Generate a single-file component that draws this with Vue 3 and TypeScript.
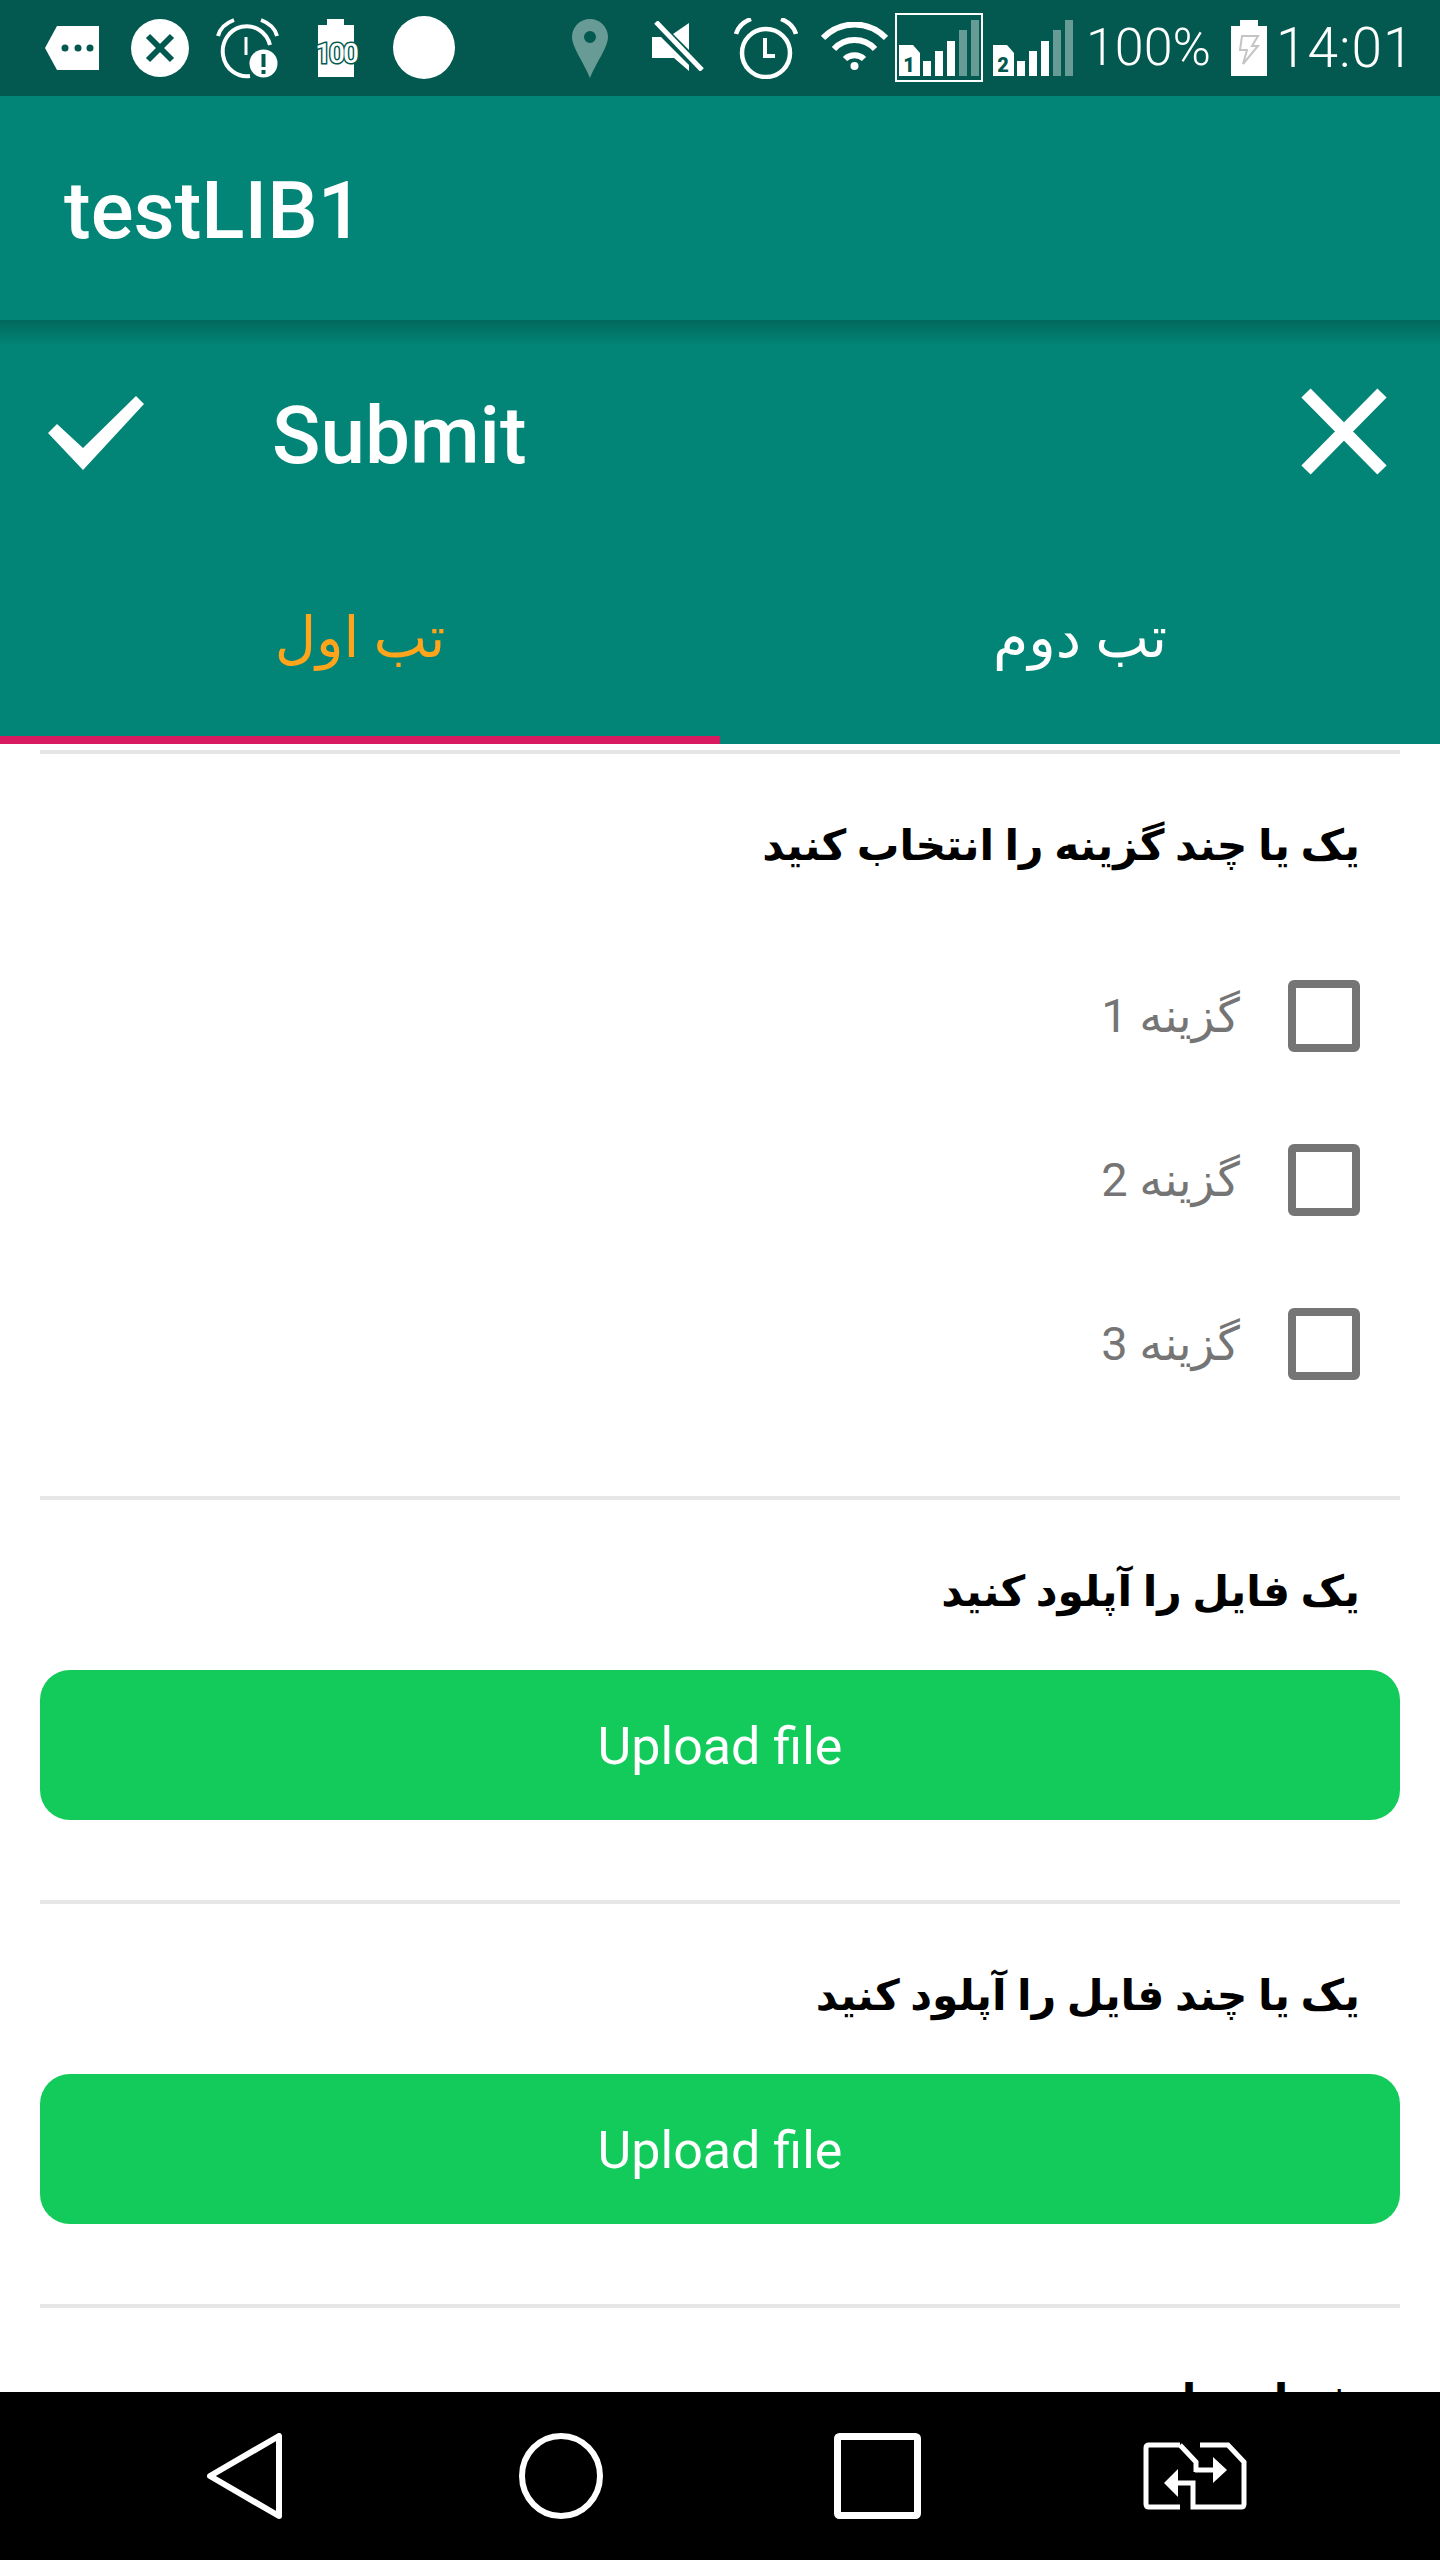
<script setup lang="ts">
interface Option {
  id: number;
  label: string;
}

const options: Option[] = [
  { id: 1, label: "گزینه 1" },
  { id: 2, label: "گزینه 2" },
  { id: 3, label: "گزینه 3" },
];
</script>

<template>
  <div class="screen">
    <div class="status-bar">
      <svg class="si si-msg" viewBox="0 0 54 44"><path d="M12 0H54V44H12L0 22Z" fill="#fff" /><circle cx="20" cy="22" r="3.5" fill="#03594f" /><circle cx="33" cy="22" r="3.5" fill="#03594f" /><circle cx="45" cy="22" r="3.5" fill="#03594f" /></svg>
      <svg class="si si-x" viewBox="0 0 58 58"><circle cx="29" cy="29" r="29" fill="#fff" /><path d="M17 17L41 41M41 17L17 41" stroke="#03594f" stroke-width="6" /></svg>
      <svg class="si si-alarmw" viewBox="0 0 63 60" fill="none" stroke="#fff"><path d="M2 18C4 10 10 5 18 2M61 18C59 10 53 5 45 2" stroke-width="4" /><path d="M54 27A24 25 0 1 0 34 58" stroke-width="4" /><path d="M30 19V37" stroke-width="3" /><circle cx="47.500" cy="45.500" r="14" fill="#fff" stroke="none" /><path d="M47.500 36V49M47.500 52V56" stroke="#03594f" stroke-width="4" /></svg>
      <svg class="si si-batt" viewBox="0 0 44 58"><path d="M13 0H30V6H40V58H4V6H13Z" fill="#fff" /><text x="22" y="44" text-anchor="middle" class="batt-num">100</text></svg>
      <span class="si si-dot"></span>
      <svg class="si si-pin" viewBox="0 0 36 59"><path fill-rule="evenodd" d="M18 0C8 0 0 8 0 18C0 28 12 44 18 59C24 44 36 28 36 18C36 8 28 0 18 0ZM18 12A6 6 0 1 1 18 24A6 6 0 1 1 18 12Z" fill="#fff" /></svg>
      <svg class="si si-mute" viewBox="0 0 53 50"><path d="M0 16H9L37 44V50L22 37H0ZM21 13L37 2V29Z" fill="#fff" /><path d="M4 1L50 49" stroke="#fff" stroke-width="5" /></svg>
      <svg class="si si-alarm" viewBox="0 0 64 61" fill="none" stroke="#fff"><path d="M2 16C4 9 9 4 17 1M62 16C60 9 55 4 47 1" stroke-width="4.500" /><ellipse cx="32" cy="35" rx="24" ry="24" stroke-width="4.500" /><path d="M31 20V38H41" stroke-width="4" /></svg>
      <svg class="si si-wifi" viewBox="0 0 67 48" fill="none" stroke="#fff"><path d="M2 16C20 -2 47 -2 65 16M13 27C24 15 43 15 54 27M24 37C29 32 38 32 43 37" stroke-width="6" /><circle cx="33.500" cy="44" r="4" fill="#fff" stroke="none" /></svg>
      <div class="si si-sim1">
        <svg class="sim-svg" viewBox="0 0 80 56"><path d="M0 25H14L21 33V56H0Z" fill="#fff" /><text x="10" y="52" text-anchor="middle" class="sim-num">1</text><rect x="24" y="41" width="8" height="15" fill="#fff" /><rect x="36" y="31" width="8" height="25" fill="#fff" /><rect x="48" y="21" width="8" height="35" fill="#fff" /><rect x="60" y="10" width="8" height="46" fill="#fff" opacity=".4" /><rect x="72" y="0" width="8" height="56" fill="#fff" opacity=".4" /></svg>
      </div>
      <svg class="si si-sim2" viewBox="0 0 80 56"><path d="M0 25H14L21 33V56H0Z" fill="#fff" /><text x="10" y="52" text-anchor="middle" class="sim-num">2</text><rect x="24" y="41" width="8" height="15" fill="#fff" /><rect x="36" y="31" width="8" height="25" fill="#fff" /><rect x="48" y="21" width="8" height="35" fill="#fff" /><rect x="60" y="10" width="8" height="46" fill="#fff" opacity=".4" /><rect x="72" y="0" width="8" height="56" fill="#fff" opacity=".4" /></svg>
      <span class="st-text st-pct">100%</span>
      <svg class="si si-charge" viewBox="0 0 36 56"><path d="M9 0H27V6H36V56H0V6H9Z" fill="#fff" /><path d="M11 16H27L21 26H27L12 44L16 30H9Z" fill="none" stroke="#c4c4c4" stroke-width="2" /></svg>
      <span class="st-text st-time">14:01</span>
    </div>

    <header class="app-bar">testLIB1</header>

    <div class="action-bar">
      <svg class="act-check" viewBox="0 0 96 74"><path d="M0 37L9 28L35 52L88 0L96 8L35 74Z" fill="#fff" /></svg>
      <span class="act-title">Submit</span>
      <svg class="act-close" viewBox="0 0 86 87"><path d="M5 5L81 82M81 5L5 82" fill="none" stroke="#fff" stroke-width="13" /></svg>
    </div>

    <div class="tabs">
      <div class="tab is-active">تب اول</div>
      <div class="tab">تب دوم</div>
    </div>

    <main class="content" dir="rtl">
      <section class="block block-options">
        <h2 class="block-title">یک یا چند گزینه را انتخاب کنید</h2>
        <ul class="options">
          <li v-for="opt in options" :key="opt.id" class="option">
            <span class="box"></span>
            <span class="option-label">{{ opt.label }}</span>
          </li>
        </ul>
      </section>
      <section class="block">
        <h2 class="block-title">یک فایل را آپلود کنید</h2>
        <button type="button" class="upload">Upload file</button>
      </section>
      <section class="block">
        <h2 class="block-title">یک یا چند فایل را آپلود کنید</h2>
        <button type="button" class="upload">Upload file</button>
      </section>
      <section class="block">
        <h2 class="block-title">شماره نامه</h2>
      </section>
    </main>

    <nav class="nav-bar">
      <svg class="nav-back" viewBox="0 0 75 86"><path d="M72 3V83L3 43Z" fill="none" stroke="#fff" stroke-width="6" stroke-linejoin="round" /></svg>
      <svg class="nav-home" viewBox="0 0 84 86"><ellipse cx="42" cy="43" rx="39" ry="40" fill="none" stroke="#fff" stroke-width="6" /></svg>
      <svg class="nav-recent" viewBox="0 0 87 86"><rect x="3.500" y="3.500" width="80" height="79" rx="2" fill="none" stroke="#fff" stroke-width="7" /></svg>
      <svg class="nav-switch" viewBox="0 0 104 68" fill="none" stroke="#fff" stroke-width="5"><path d="M37 3H6C4 3 3 4 3 6V62C3 64 4 65 6 65H37" /><path d="M37 3L53 20V30" /><path d="M57 3H85L101 20V62C101 64 100 65 98 65H50V41H28" /><path d="M52 28H72" /><path d="M84 28L70 15V41Z" fill="#fff" stroke="none" /><path d="M21 41L35 27V55Z" fill="#fff" stroke="none" /></svg>
    </nav>
  </div>
</template>

<style scoped>
.screen {
  position: relative;
  width: 1440px;
  height: 2560px;
  display: flex;
  flex-direction: column;
  overflow: hidden;
  background: #fff;
  font-family: Roboto, "DejaVu Sans", sans-serif;
}

/* status bar */
.status-bar {
  height: 96px;
  flex: none;
  display: flex;
  align-items: flex-start;
  background: #03594f;
  color: #fff;
}

.si {
  flex: none;
  display: block;
}

.si-msg { width: 54px; height: 44px; margin: 26px 0 0 45px; }
.si-x { width: 58px; height: 58px; margin: 19px 0 0 32px; }
.si-alarmw { width: 63px; height: 60px; margin: 18px 0 0 27px; overflow: visible; }
.si-batt { width: 44px; height: 58px; margin: 19px 0 0 35px; overflow: visible; }
.si-dot { width: 62px; height: 63px; margin: 16px 0 0 35px; border-radius: 50%; background: #fff; }
.si-pin { width: 36px; height: 59px; margin: 19px 0 0 117px; opacity: 0.4; }
.si-mute { width: 53px; height: 50px; margin: 21px 0 0 44px; }
.si-alarm { width: 64px; height: 61px; margin: 18px 0 0 29px; }
.si-wifi { width: 67px; height: 48px; margin: 22px 0 0 23px; }

.si-sim1 {
  width: 88px;
  height: 69px;
  margin: 13px 0 0 7px;
  padding: 5px 0 0 2px;
  border: 2px solid #fff;
  box-sizing: border-box;
}

.sim-svg {
  display: block;
  width: 80px;
  height: 56px;
}

.si-sim2 { width: 80px; height: 56px; margin: 20px 0 0 10px; }

.sim-num {
  font: 900 20px Roboto, sans-serif;
  fill: #03594f;
}

.batt-num {
  font: 500 28px Roboto, sans-serif;
  letter-spacing: -2px;
  fill: #fff;
  stroke: #03594f;
  stroke-width: 3px;
  paint-order: stroke;
}

.st-text {
  flex: none;
  font-weight: 300;
  line-height: 96px;
}

.st-pct { font-size: 52px; margin-left: 13px; }
.si-charge { width: 36px; height: 56px; margin: 20px 0 0 20px; }
.st-time { font-size: 55px; margin-left: 9px; letter-spacing: 1px; }

/* app bar */
.app-bar {
  height: 224px;
  flex: none;
  box-sizing: border-box;
  padding: 6px 0 0 64px;
  display: flex;
  align-items: center;
  background: #028577;
  color: #fff;
  font-size: 80px;
  font-weight: 500;
}

/* action bar */
.action-bar {
  position: relative;
  height: 232px;
  flex: none;
  display: flex;
  align-items: center;
  background: #028577;
  color: #fff;
}

.action-bar::before {
  content: "";
  position: absolute;
  top: 0;
  left: 0;
  right: 0;
  height: 26px;
  background: linear-gradient(rgba(0, 0, 0, 0.22), rgba(0, 0, 0, 0));
}

.act-check { width: 96px; height: 74px; margin: 0 0 6px 48px; }
.act-title { margin-left: 128px; font-size: 80px; font-weight: 500; }
.act-close { width: 86px; height: 87px; margin: 0 53px 10px auto; }

/* tabs */
.tabs {
  height: 192px;
  flex: none;
  display: flex;
  background: #028577;
}

.tab {
  flex: 1;
  display: flex;
  align-items: center;
  justify-content: center;
  box-sizing: border-box;
  padding-bottom: 14px;
  border-bottom: 8px solid transparent;
  color: #fff;
  font-size: 57px;
}

.tab.is-active {
  color: #ffa41b;
  border-bottom-color: #d81b60;
}

/* form */
.content {
  flex: 1;
  min-height: 0;
  overflow: hidden;
  padding: 6px 40px 0;
}

.block {
  height: 404px;
  box-sizing: border-box;
  border-top: 4px solid #e6e6e6;
  padding-top: 60px;
}

.block-options {
  height: 746px;
}

.block-title {
  margin: 0 0 46px;
  padding-right: 40px;
  color: #000;
  font-size: 42.500px;
  line-height: 64px;
  font-weight: 700;
}

.options {
  margin: 102px 0 0;
  padding: 0 40px 0 0;
  list-style: none;
}

.option {
  height: 164px;
  display: flex;
  align-items: flex-start;
}

.box {
  flex: none;
  width: 72px;
  height: 72px;
  box-sizing: border-box;
  border: 8px solid #757575;
  border-radius: 6px;
}

.option-label {
  margin-right: 48px;
  color: #757575;
  font-size: 47px;
  line-height: 72px;
}

.upload {
  display: block;
  width: 100%;
  height: 150px;
  border: 0;
  border-radius: 30px;
  background: #13cb5b;
  color: #fff;
  font-family: inherit;
  font-size: 52px;
  padding-top: 3px;
}

/* system nav */
.nav-bar {
  position: absolute;
  left: 0;
  right: 0;
  bottom: 0;
  height: 168px;
  display: flex;
  align-items: center;
  background: #000;
}

.nav-back { width: 75px; height: 86px; margin-left: 207px; }
.nav-home { width: 84px; height: 86px; margin-left: 237px; }
.nav-recent { width: 87px; height: 86px; margin-left: 231px; }
.nav-switch { width: 104px; height: 68px; margin-left: 222px; }
</style>
